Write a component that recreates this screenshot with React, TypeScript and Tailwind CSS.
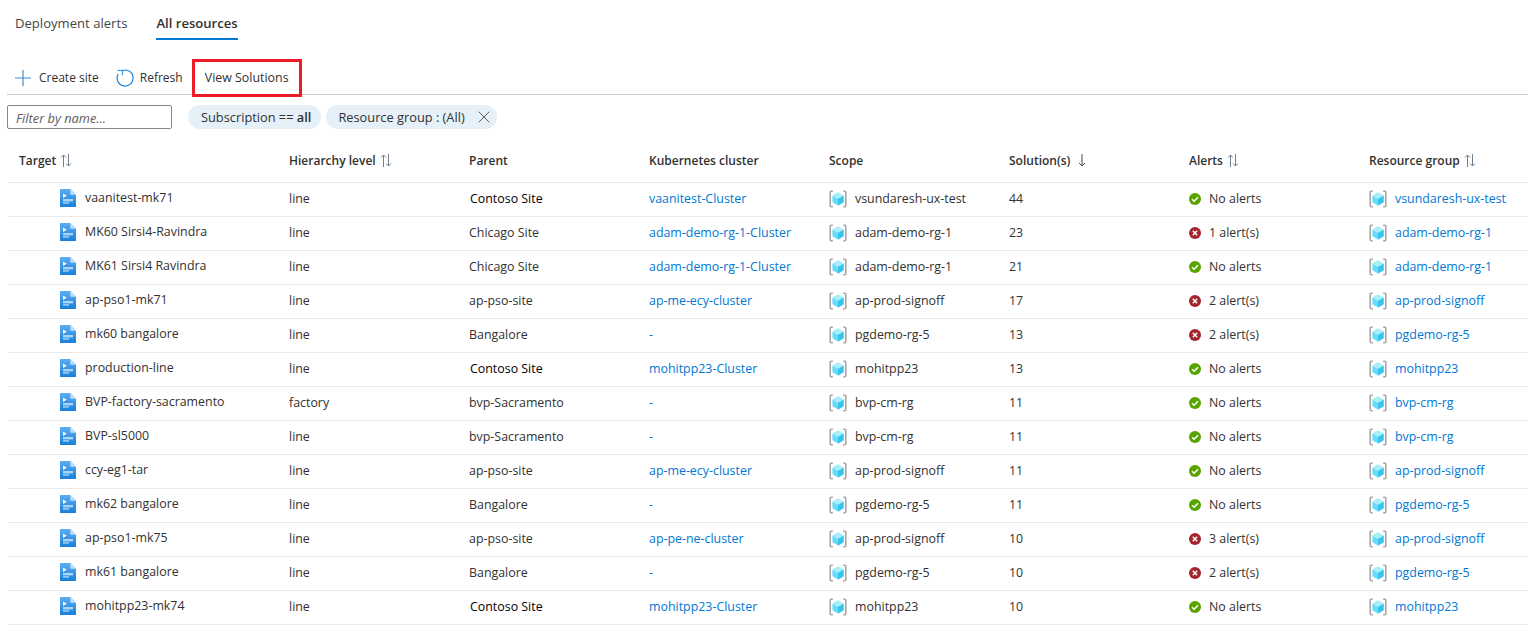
import { useId } from 'react';
import { X } from 'lucide-react';

type Row = {
  target: string;
  level: string;
  parent: string;
  cluster: string;
  scope: string;
  solutions: number;
  alerts: number;
};

const rows: Row[] = [
  { target: 'vaanitest-mk71', level: 'line', parent: 'Contoso Site', cluster: 'vaanitest-Cluster', scope: 'vsundaresh-ux-test', solutions: 44, alerts: 0 },
  { target: 'MK60 Sirsi4-Ravindra', level: 'line', parent: 'Chicago Site', cluster: 'adam-demo-rg-1-Cluster', scope: 'adam-demo-rg-1', solutions: 23, alerts: 1 },
  { target: 'MK61 Sirsi4 Ravindra', level: 'line', parent: 'Chicago Site', cluster: 'adam-demo-rg-1-Cluster', scope: 'adam-demo-rg-1', solutions: 21, alerts: 0 },
  { target: 'ap-pso1-mk71', level: 'line', parent: 'ap-pso-site', cluster: 'ap-me-ecy-cluster', scope: 'ap-prod-signoff', solutions: 17, alerts: 2 },
  { target: 'mk60 bangalore', level: 'line', parent: 'Bangalore', cluster: '-', scope: 'pgdemo-rg-5', solutions: 13, alerts: 2 },
  { target: 'production-line', level: 'line', parent: 'Contoso Site', cluster: 'mohitpp23-Cluster', scope: 'mohitpp23', solutions: 13, alerts: 0 },
  { target: 'BVP-factory-sacramento', level: 'factory', parent: 'bvp-Sacramento', cluster: '-', scope: 'bvp-cm-rg', solutions: 11, alerts: 0 },
  { target: 'BVP-sl5000', level: 'line', parent: 'bvp-Sacramento', cluster: '-', scope: 'bvp-cm-rg', solutions: 11, alerts: 0 },
  { target: 'ccy-eg1-tar', level: 'line', parent: 'ap-pso-site', cluster: 'ap-me-ecy-cluster', scope: 'ap-prod-signoff', solutions: 11, alerts: 0 },
  { target: 'mk62 bangalore', level: 'line', parent: 'Bangalore', cluster: '-', scope: 'pgdemo-rg-5', solutions: 11, alerts: 0 },
  { target: 'ap-pso1-mk75', level: 'line', parent: 'ap-pso-site', cluster: 'ap-pe-ne-cluster', scope: 'ap-prod-signoff', solutions: 10, alerts: 3 },
  { target: 'mk61 bangalore', level: 'line', parent: 'Bangalore', cluster: '-', scope: 'pgdemo-rg-5', solutions: 10, alerts: 2 },
  { target: 'mohitpp23-mk74', level: 'line', parent: 'Contoso Site', cluster: 'mohitpp23-Cluster', scope: 'mohitpp23', solutions: 10, alerts: 0 },
];

const gridCols = 'grid grid-cols-[270px_180px_180px_180px_180px_180px_180px_1fr]';

function FileIcon() {
  const id = useId();
  return (
    <svg width="16" height="18" viewBox="0 0 16 18" className="shrink-0">
      <defs>
        <linearGradient id={id} x1="0" y1="0" x2="0" y2="1">
          <stop offset="0" stopColor="#5aaef0" />
          <stop offset="1" stopColor="#1a7fdc" />
        </linearGradient>
      </defs>
      <path d="M0 .5A.5.5 0 0 1 .5 0h9.8L16 5.7v11.8a.5.5 0 0 1-.5.5H.5a.5.5 0 0 1-.5-.5z" fill={`url(#${id})`} />
      <path d="M10.3 0L16 5.7h-5.2a.5.5 0 0 1-.5-.5z" fill="#bfe0fa" />
      <path d="M3 4.5l3.8 2.3L3 9.1z" fill="#ffffff" />
      <rect x="3" y="10" width="10" height="2.4" fill="#a9d5f8" />
      <rect x="3" y="13.2" width="6" height="1.4" fill="#a9d5f8" />
    </svg>
  );
}

function ResourceGroupIcon() {
  return (
    <svg width="18" height="18" viewBox="0 0 18 18" className="shrink-0">
      <path d="M3.8 1.2H2.2a1 1 0 0 0-1 1v13.6a1 1 0 0 0 1 1h1.6" fill="none" stroke="#a6a6a6" strokeWidth="1.6" />
      <path d="M14.2 1.2h1.6a1 1 0 0 1 1 1v13.6a1 1 0 0 1-1 1h-1.6" fill="none" stroke="#a6a6a6" strokeWidth="1.6" />
      <path d="M9 2.6l5.6 3.1v6.6L9 15.4l-5.6-3.1V5.7z" fill="#66dcf8" />
      <path d="M9 2.6l5.6 3.1L9 8.9 3.4 5.7z" fill="#a8eefb" />
      <path d="M9 8.9l5.6-3.2v6.6L9 15.4z" fill="#38c4ec" />
    </svg>
  );
}

function StatusIcon({ ok }: { ok: boolean }) {
  return (
    <svg width="12" height="12" viewBox="0 0 12 12" className="shrink-0">
      <circle cx="6" cy="6" r="6" fill={ok ? '#57a300' : '#a4262c'} />
      {ok ? (
        <path d="M3 6.2l2.1 2.1L9 4.2" fill="none" stroke="#ffffff" strokeWidth="1.5" />
      ) : (
        <path d="M3.8 3.8l4.4 4.4M8.2 3.8L3.8 8.2" fill="none" stroke="#ffffff" strokeWidth="1.5" />
      )}
    </svg>
  );
}

function SortBoth() {
  return (
    <svg width="12" height="13" viewBox="0 0 12 13" fill="none" stroke="#6f7f8f" strokeWidth="1" className="shrink-0">
      <path d="M3.5 13V1M1 3.5L3.5 1 6 3.5" />
      <path d="M8.5 0v12M6 9.5L8.5 12 11 9.5" />
    </svg>
  );
}

function SortDown() {
  return (
    <svg width="8" height="13" viewBox="0 0 8 13" fill="none" stroke="#484644" strokeWidth="1" className="ml-[4px] shrink-0">
      <path d="M4 0v12M1 9L4 12 7 9" />
    </svg>
  );
}

function RefreshIcon() {
  return (
    <svg width="18" height="18" viewBox="0 0 18 18" fill="none" stroke="#1e86d8" strokeWidth="1.2" className="shrink-0">
      <path d="M6.2 1.6A8 8 0 1 1 2.2 5" />
      <path d="M1.4 1.4L6.4 1.4 6.4 6.2" strokeWidth="1" />
    </svg>
  );
}

function PlusIcon() {
  return (
    <svg width="16" height="16" viewBox="0 0 16 16" fill="none" stroke="#3d8fd6" strokeWidth="1.2" className="shrink-0">
      <path d="M8 0v16M0 8h16" />
    </svg>
  );
}

function Header({ label, sort }: { label: string; sort?: 'both' | 'down' }) {
  return (
    <div className="flex items-center gap-[4px] pl-[11px] font-semibold text-[#323130]">
      {label}
      {sort === 'both' && <SortBoth />}
      {sort === 'down' && <SortDown />}
    </div>
  );
}

export default function App() {
  return (
    <div className="h-[626px] w-[1528px] overflow-hidden bg-white text-[12.4px] leading-4 text-[#323130] font-['Open_Sans','Liberation_Sans',sans-serif]">
      {/* Tabs */}
      <div className="flex h-[40px] gap-[29px] pl-[15px] text-[13.1px]">
        <div className="pt-[15px] text-[#484644]">Deployment alerts</div>
        <div className="border-b-2 border-[#0078d4] pt-[15px] font-semibold">All resources</div>
      </div>

      {/* Toolbar */}
      <div className="ml-[7px] mt-[19px] flex h-[36px] items-stretch border-b border-[#c8c8c8] pt-[2px] text-[12px]">
        <div className="flex items-center gap-[8px] pl-[8px]">
          <PlusIcon />
          Create site
        </div>
        <div className="ml-[17px] flex items-center gap-[6px]">
          <RefreshIcon />
          Refresh
        </div>
        <div className="ml-[9px] -mt-[2px] -mb-[3px] flex w-[110px] items-center justify-center border-[3px] border-[#ed1c24] text-[12.4px]">View Solutions</div>
      </div>

      {/* Filters */}
      <div className="ml-[7px] mt-[10px] flex items-center text-[12.8px]">
        <div className="flex h-[24px] w-[165px] items-center rounded-[2px] border border-[#8a8886] pl-[8px] pt-[2px] italic text-[#605e5c]">Filter by name...</div>
        <div className="ml-[16px] flex h-[24px] items-center rounded-full bg-[#e5f0f9] pl-[13px] pr-[10px]">
          Subscription ==&nbsp;<span className="font-semibold">all</span>
        </div>
        <div className="ml-[5px] flex h-[24px] items-center gap-[9px] rounded-full bg-[#e5f0f9] pl-[12px] pr-[3px]">
          Resource group : (All)
          <X size={20} strokeWidth={1.2} className="text-[#605e5c]" />
        </div>
      </div>

      {/* Table */}
      <div className={`${gridCols} ml-[8px] mt-[13px] h-[41px] items-center border-b border-[#edebe9] pb-[3px] text-[12px]`}>
        <Header label="Target" sort="both" />
        <Header label="Hierarchy level" sort="both" />
        <Header label="Parent" />
        <Header label="Kubernetes cluster" />
        <Header label="Scope" />
        <Header label="Solution(s)" sort="down" />
        <Header label="Alerts" sort="both" />
        <Header label="Resource group" sort="both" />
      </div>
      {rows.map((r) => (
        <div key={r.target} className={`${gridCols} ml-[8px] h-[34px] items-center border-b border-[#edebe9] pb-[2px]`}>
          <div className="flex -translate-y-px items-center gap-[9px] pl-[52px]">
            <FileIcon />
            {r.target}
          </div>
          <div className="pl-[11px]">{r.level}</div>
          <div className={`pl-[11px] ${r.parent === 'Contoso Site' ? 'translate-x-px text-black' : ''}`}>{r.parent}</div>
          <div className="pl-[11px] text-[#0078d4]">{r.cluster}</div>
          <div className="flex items-center gap-[8px] pl-[11px]">
            <ResourceGroupIcon />
            {r.scope}
          </div>
          <div className="pl-[11px]">{r.solutions}</div>
          <div className="flex items-center gap-[8px] pl-[11px]">
            <StatusIcon ok={r.alerts === 0} />
            {r.alerts === 0 ? 'No alerts' : `${r.alerts} alert(s)`}
          </div>
          <div className="flex items-center gap-[8px] pl-[11px] text-[#0078d4]">
            <ResourceGroupIcon />
            {r.scope}
          </div>
        </div>
      ))}
    </div>
  );
}
